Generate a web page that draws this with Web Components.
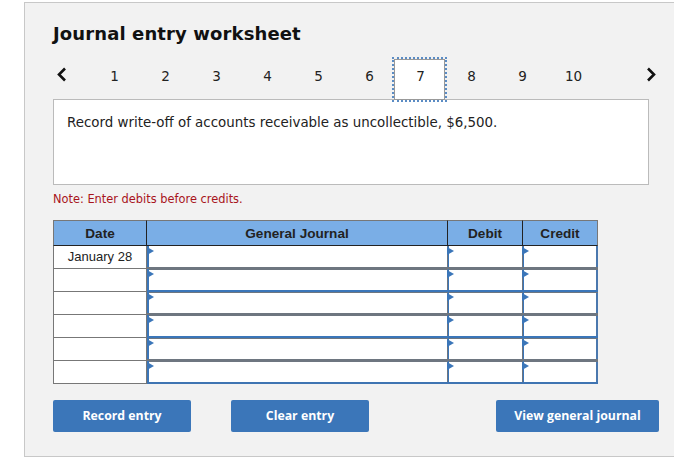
<!DOCTYPE html>
<html>
<head>
<meta charset="utf-8">
<style>
  html, body { margin: 0; padding: 0; background: #fff; }
</style>
</head>
<body>
<journal-worksheet>
  <span slot="title">Journal entry worksheet</span>
  <span slot="prompt">Record write-off of accounts receivable as uncollectible, $6,500.</span>
  <span slot="note">Note: Enter debits before credits.</span>
</journal-worksheet>

<script>
class TabStrip extends HTMLElement {
  connectedCallback() {
    const active = Number(this.getAttribute('active'));
    let tabs = '';
    for (let i = 1; i <= 10; i++) {
      tabs += `<div class="tab ${i === active ? 'on' : ''}"><span>${i}</span></div>`;
    }
    this.attachShadow({ mode: 'open' });
    this.shadowRoot.innerHTML = `
      <style>
        :host { display: flex; height: 41px; align-items: center; font: 13.5px "DejaVu Sans", sans-serif; color: #222; position: relative; z-index: 1; }
        svg { width: 11px; height: 15px; flex: none; }
        .prev { margin: -8px 22px 0 3px; }
        .next { margin: -8px -8px 0 auto; }
        .tabs { display: grid; grid-template-columns: repeat(10, 51px); }
        .tab { height: 41px; line-height: 36px; text-align: center; position: relative; }
        .tab span { position: relative; }
        .on::before { content: ""; position: absolute; left: -1px; right: 1px; top: 1px; bottom: -1px; background: #fff; border: 1px solid #999; box-sizing: border-box; outline: 2px dotted #5b8cc4; }
      </style>
      <svg class="prev" viewBox="0 0 11 15"><path d="M9 1.5 L3 7.5 L9 13.5" fill="none" stroke="#111" stroke-width="2.6"/></svg>
      <div class="tabs">${tabs}</div>
      <svg class="next" viewBox="0 0 11 15"><path d="M2 1.5 L8 7.5 L2 13.5" fill="none" stroke="#111" stroke-width="2.6"/></svg>
    `;
  }
}
customElements.define('tab-strip', TabStrip);

class EntryTable extends HTMLElement {
  connectedCallback() {
    const dates = ['January 28', '', '', '', '', ''];
    const rows = dates.map((d, i) => {
      const line = (i % 2 ? 'blue' : 'gray') + (i === dates.length - 1 ? ' end' : '');
      return `
      <div class="date">${d}</div>
      <div class="field first ${line}"><i></i></div>
      <div class="field ${line}"><i></i></div>
      <div class="field last ${line}"><i></i></div>`;
    }).join('');
    this.attachShadow({ mode: 'open' });
    this.shadowRoot.innerHTML = `
      <style>
        :host { display: block; width: 545px; }
        .grid { display: grid; grid-template-columns: 94px 300px 75px 76px; grid-template-rows: 26px; grid-auto-rows: 23px; }
        .head { box-sizing: border-box; background: #7aaee6; border-top: 1px solid #777; border-bottom: 1px solid #222; font: bold 13.6px "Liberation Sans", sans-serif; color: #222; text-align: center; line-height: 26px; }
        .h1 { border-left: 1px solid #777; border-right: 1px solid #222; }
        .h3, .h4 { border-left: 1px solid #222; }
        .h4 { border-right: 1px solid #777; }
        .date { box-sizing: border-box; background: #fff; border: 1px solid #777; border-width: 0 1px 1px 1px; font: 13px "Liberation Sans", sans-serif; color: #222; text-align: center; line-height: 22px; }
        .field { background: #fff; position: relative; }
        /* left rule of the cell */
        .field::before { content: ""; position: absolute; z-index: 1; left: 0; top: 0; bottom: 0; width: 2px; background: linear-gradient(90deg, #6d7580 1px, #3b76b9 1px); }
        .first::before { background: #3b76b9; }
        /* bottom rule, spills 1px into the next row */
        .field::after { content: ""; position: absolute; z-index: 1; left: 0; right: 0; bottom: -1px; height: 3px; }
        .gray::after { background: #6e7680; }
        .blue::after { background: linear-gradient(#3b76b9 2px, #6e7680 2px); }
        .end::after { bottom: 0; height: 2px; background: #3f74b2; }
        .last { box-shadow: inset -2px 0 0 #4a78ae; }
        i { position: absolute; z-index: 2; left: 0; top: 1px; width: 0; height: 0; border-left: 7px solid #3b76b9; border-top: 4px solid transparent; border-bottom: 4px solid transparent; }
      </style>
      <div class="grid">
        <div class="head h1">Date</div>
        <div class="head h2">General Journal</div>
        <div class="head h3">Debit</div>
        <div class="head h4">Credit</div>
        ${rows}
      </div>
    `;
  }
}
customElements.define('entry-table', EntryTable);

class ActionButton extends HTMLElement {
  connectedCallback() {
    this.attachShadow({ mode: 'open' });
    this.shadowRoot.innerHTML = `
      <style>
        :host { display: block; height: 32px; background: #3b76b9; border-radius: 2px; color: #fff; font: bold 12.3px "Open Sans", sans-serif; line-height: 32px; text-align: center; }
      </style>
      <slot></slot>
    `;
  }
}
customElements.define('action-button', ActionButton);

class JournalWorksheet extends HTMLElement {
  connectedCallback() {
    this.attachShadow({ mode: 'open' });
    this.shadowRoot.innerHTML = `
      <style>
        :host { display: block; box-sizing: border-box; margin: 2px 0 0 24px; height: 455px; padding: 0 0 0 28px; background: #f2f2f2; border: 1px solid #c8c8c8; border-right: 0; font-family: "DejaVu Sans", sans-serif; }
        h1 { margin: 0; padding-top: 19px; height: 36px; line-height: 23px; font-size: 18px; letter-spacing: 0.12px; font-weight: bold; color: #111; }
        tab-strip { width: 596px; }
        .prompt { box-sizing: border-box; width: 596px; height: 86px; background: #fff; border: 1px solid #bbb; padding: 14px 13px; font-size: 13.4px; line-height: 18px; color: #222; }
        .note { margin: 7px 0 14px; font-size: 11.4px; line-height: 14px; color: #a8141c; }
        .actions { display: flex; margin-top: 16px; width: 606px; }
        .rec { width: 138px; }
        .clr { width: 138px; margin-left: 40px; }
        .view { width: 163px; margin-left: auto; }
      </style>
      <h1><slot name="title"></slot></h1>
      <tab-strip active="7"></tab-strip>
      <div class="prompt"><slot name="prompt"></slot></div>
      <div class="note"><slot name="note"></slot></div>
      <entry-table></entry-table>
      <div class="actions">
        <action-button class="rec">Record entry</action-button>
        <action-button class="clr">Clear entry</action-button>
        <action-button class="view">View general journal</action-button>
      </div>
    `;
  }
}
customElements.define('journal-worksheet', JournalWorksheet);
</script>
</body>
</html>
